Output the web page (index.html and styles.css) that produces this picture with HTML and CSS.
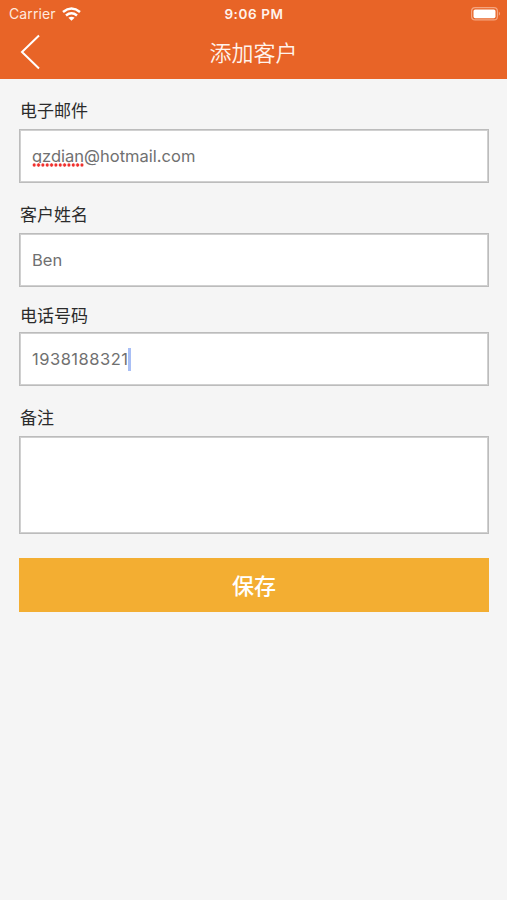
FILE: index.html
```html
<!DOCTYPE html>
<html lang="zh-CN">
<head>
<meta charset="utf-8">
<title>添加客户</title>
<link rel="stylesheet" href="styles.css">
</head>
<body>
<header class="header">
  <div class="status">
    <div class="carrier"><span>Carrier</span>
      <svg class="wifi" width="19" height="14" viewBox="0 0 19 14" fill="none" stroke="#fff" stroke-width="2.6"><path d="M1 4.9Q9.5-1.9 18 4.9M4 8.4Q9.5 4.1 15 8.4"/><path d="M6.4 10.8Q9.5 8.6 12.6 10.8L9.5 13.8Z" fill="#fff" stroke="none"/></svg>
    </div>
    <div class="time">9:06 PM</div>
    <svg class="battery" width="30" height="14" viewBox="0 0 30 14"><rect x=".6" y=".6" width="25.8" height="12.3" rx="3.5" fill="none" stroke="#f4a581" stroke-width="1.2"/><rect x="2.5" y="2.4" width="22" height="8.8" rx="1.7" fill="#fff"/><path d="M27.8 4.6Q30.3 6.7 27.8 8.8Z" fill="#f4a581"/></svg>
  </div>
  <div class="nav">
    <svg class="back" width="22" height="36" viewBox="0 0 22 36" fill="none" stroke="#fff" stroke-width="2"><path d="M20 1.5 3 18 20 34.5"/></svg>
    <h1 class="title">添加客户</h1>
  </div>
</header>
<main class="form">
  <div class="field email">
    <div class="label">电子邮件</div>
    <div class="input"><span class="misspelled">gzdian</span><span>@hotmail.com</span></div>
  </div>
  <div class="field name">
    <div class="label">客户姓名</div>
    <div class="input">Ben</div>
  </div>
  <div class="field phone">
    <div class="label">电话号码</div>
    <div class="input"><span class="digits">1938188321</span><i class="caret"></i></div>
  </div>
  <div class="field notes">
    <div class="label">备注</div>
    <div class="input area"></div>
  </div>
  <div class="save">保存</div>
</main>
</body>
</html>
```
FILE: styles.css
```css
* { box-sizing: border-box; }
body {
  margin: 0;
  min-height: 900px;
  background: #f5f5f5;
  color: #2b2b2b;
  font-family: Inter, "Noto Sans CJK SC", sans-serif;
}
.header { height: 79px; background: #e86427; color: #fff; }
.status {
  display: grid;
  grid-template-columns: 1fr auto 1fr;
  align-items: center;
  height: 27px;
  padding: 0 6px 0 9px;
}
.carrier { display: flex; align-items: center; gap: 6px; font-size: 14px; letter-spacing: .1px; color: #ffe9de; }
.wifi { display: block; }
.time { margin-left: -2px; font-size: 13.5px; font-weight: 600; letter-spacing: .6px; color: #fff3ec; }
.battery { justify-self: end; }
.nav {
  display: grid;
  grid-template-columns: 60px 1fr 60px;
  align-items: center;
  height: 50px;
}
.back { margin-left: 19px; }
.title { margin: 2px 0 0; text-align: center; font-size: 22px; font-weight: 350; line-height: 30px; color: #fff3ec; }
.form { padding: 19px 18px 0 19px; }
.field { display: flex; flex-direction: column; }
.label { height: 31px; padding: 1px 0 0 1px; font-size: 17px; line-height: 24px; }
.name { margin-top: 19px; }
.phone { margin-top: 17px; }
.phone .label { height: 28px; padding-top: 0; }
.notes { margin-top: 19px; }
.notes .label { height: 31px; }
.input {
  display: flex;
  align-items: center;
  height: 54px;
  padding-left: 12px;
  border: 1px solid #bcbcbc;
  box-shadow: inset 0 0 0 1px #d0d0d0;
  background: #fff;
  color: #707070;
  font-size: 16.5px;
}
.area { height: 98px; }
.misspelled { position: relative; }
.misspelled::after {
  content: "";
  position: absolute;
  left: 0;
  right: 0;
  bottom: -1px;
  height: 4px;
  background: radial-gradient(circle at 50% 50%, #f0302d 1.4px, #fff 1.9px) 0 0 / 4.35px 4px repeat-x;
}
.digits { letter-spacing: .5px; }
.caret { width: 3px; height: 23px; margin-left: -.5px; background: #a9bff5; }
.save {
  display: flex;
  align-items: center;
  justify-content: center;
  height: 54px;
  margin-top: 24px;
  padding-bottom: 2px;
  background: #f3ae32;
  color: #fff;
  font-size: 22px;
  font-weight: 500;
}
```
